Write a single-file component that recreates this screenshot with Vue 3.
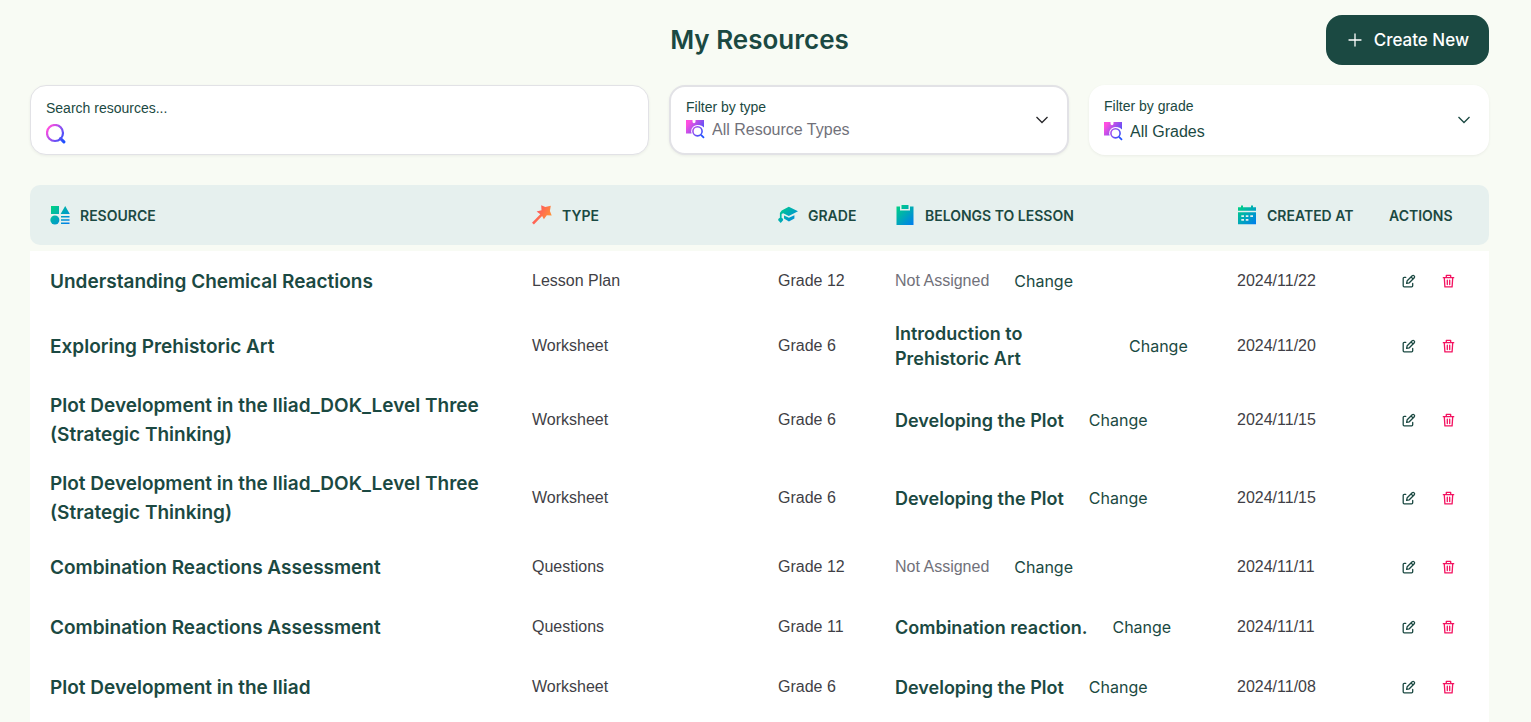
<script setup>
import { ref } from 'vue'

const search = ref('')
const type = ref('')
const grade = ref('all')

const rows = [
  { title: 'Understanding Chemical Reactions', type: 'Lesson Plan', grade: 'Grade 12', lesson: '', date: '2024/11/22' },
  { title: 'Exploring Prehistoric Art', type: 'Worksheet', grade: 'Grade 6', lesson: 'Introduction to Prehistoric Art', date: '2024/11/20' },
  { title: 'Plot Development in the Iliad_DOK_Level Three (Strategic Thinking)', type: 'Worksheet', grade: 'Grade 6', lesson: 'Developing the Plot', date: '2024/11/15' },
  { title: 'Plot Development in the Iliad_DOK_Level Three (Strategic Thinking)', type: 'Worksheet', grade: 'Grade 6', lesson: 'Developing the Plot', date: '2024/11/15' },
  { title: 'Combination Reactions Assessment', type: 'Questions', grade: 'Grade 12', lesson: '', date: '2024/11/11' },
  { title: 'Combination Reactions Assessment', type: 'Questions', grade: 'Grade 11', lesson: 'Combination reaction.', date: '2024/11/11' },
  { title: 'Plot Development in the Iliad', type: 'Worksheet', grade: 'Grade 6', lesson: 'Developing the Plot', date: '2024/11/08' }
]
</script>

<template>
  <main class="page">
    <svg class="defs" width="0" height="0" aria-hidden="true">
      <defs>
        <linearGradient id="pink-blue" gradientUnits="userSpaceOnUse" x1="2" y1="4" x2="19" y2="16">
          <stop offset="0" stop-color="#ff4fe0" />
          <stop offset="1" stop-color="#1c50ff" />
        </linearGradient>
        <linearGradient id="green-blue" gradientUnits="userSpaceOnUse" x1="0" y1="0" x2="20" y2="20">
          <stop offset="0" stop-color="#00d97a" />
          <stop offset="1" stop-color="#0078f5" />
        </linearGradient>
        <linearGradient id="red-orange" gradientUnits="userSpaceOnUse" x1="3" y1="4" x2="18" y2="12">
          <stop offset="0" stop-color="#ff4f63" />
          <stop offset="1" stop-color="#ff9138" />
        </linearGradient>
      </defs>
    </svg>

    <header class="top">
      <h1>My Resources</h1>
      <button class="create" type="button">
        <svg width="14" height="14" viewBox="0 0 14 14" fill="none" stroke="currentColor" stroke-width="1.3" stroke-linecap="round"><path d="M7 1v12M1 7h12" /></svg>
        Create New
      </button>
    </header>

    <section class="filters">
      <div class="box bordered">
        <div class="field spaced">
          <label for="search">Search resources...</label>
          <div class="control">
            <svg width="20" height="20" viewBox="0 0 20 20" fill="none" stroke="url(#pink-blue)"><circle cx="9" cy="9" r="8" stroke-width="2.2" /><path d="M14.500 14.500l3.400 3.400" stroke-width="3" stroke-linecap="round" /></svg>
            <input id="search" v-model="search" type="text">
          </div>
        </div>
      </div>
      <div class="box focused">
        <div class="field">
          <label for="type">Filter by type</label>
          <div class="control">
            <svg width="20" height="20" viewBox="0 1 20 20"><path fill="url(#pink-blue)" d="M0 1h6.500v1.500c0 2.200 3 2.200 3 0V1H18v7.500A7 7 0 0 0 6 14.500H0z" /><circle cx="11.500" cy="12.300" r="6.300" fill="#fff" /><circle cx="11.500" cy="12.300" r="4.600" fill="#fff" stroke="url(#pink-blue)" stroke-width="1.600" /><path d="M15 15.800l3 3" stroke="#2453ff" stroke-width="1.800" /></svg>
            <select id="type" v-model="type" class="placeholder">
              <option value="">All Resource Types</option>
            </select>
          </div>
        </div>
        <svg class="chevron dark" width="12" height="8" viewBox="0 0 12 8" fill="none" stroke="currentColor" stroke-width="1.300"><path d="M.5 1l5.500 5.500L11.500 1" /></svg>
      </div>
      <div class="box">
        <div class="field spaced">
          <label for="grade">Filter by grade</label>
          <div class="control">
            <svg width="20" height="20" viewBox="0 1 20 20"><path fill="url(#pink-blue)" d="M0 1h6.500v1.500c0 2.200 3 2.200 3 0V1H18v7.500A7 7 0 0 0 6 14.500H0z" /><circle cx="11.500" cy="12.300" r="6.300" fill="#fff" /><circle cx="11.500" cy="12.300" r="4.600" fill="#fff" stroke="url(#pink-blue)" stroke-width="1.600" /><path d="M15 15.800l3 3" stroke="#2453ff" stroke-width="1.800" /></svg>
            <select id="grade" v-model="grade">
              <option value="all">All Grades</option>
            </select>
          </div>
        </div>
        <svg class="chevron" width="12" height="8" viewBox="0 0 12 8" fill="none" stroke="currentColor" stroke-width="1.300"><path d="M.5 1l5.500 5.500L11.500 1" /></svg>
      </div>
    </section>

    <section class="list">
      <table>
        <colgroup>
          <col>
          <col class="c-type">
          <col class="c-grade">
          <col class="c-lesson">
          <col class="c-date">
          <col class="c-actions">
        </colgroup>
        <thead>
          <tr>
            <th scope="col">
              <div class="head">
                <svg width="20" height="20" viewBox="0 0 20 20" fill="url(#green-blue)"><path d="M1 1h8v8H1zM15.200 1l4.600 8h-9.200zM11 11h8.500v1.600H11zM11 14.200h8.500v1.600H11zM11 17.400h8.500V19H11z" /><circle cx="4.900" cy="15" r="4.500" /></svg>
                RESOURCE
              </div>
            </th>
            <th scope="col">
              <div class="head">
                <svg width="20" height="20" viewBox="0 0 20 20" fill="url(#red-orange)"><path d="M9.200.2l4.100 1.700L18.800.8l-.9 5.200 1.800 4.500-4.900-.2-2.900 3.900-1.800-3.300-8.200 8.700-1.900-1.900L8.300 9.300 4.600 6.500l4.900-1.200z" /></svg>
                TYPE
              </div>
            </th>
            <th scope="col">
              <div class="head">
                <svg width="20" height="20" viewBox="0 0 20 20"><path fill="url(#green-blue)" d="M10.800 1.800L20 6.300l-9.200 4.600-5.600-2.700-1.600.9v3.600c1.200.5 1.700 1.400 1.500 2.500L2.700 18 .2 15.200c-.2-1.100.5-2 1.700-2.500V7.900l1.800-2.300zM6 10.400l4.900 2.400 5.500-2.600v3.400l-5.500 3-4.900-3z" /></svg>
                GRADE
              </div>
            </th>
            <th scope="col">
              <div class="head">
                <svg width="20" height="20" viewBox="0 0 20 20"><path fill="url(#green-blue)" d="M1.500 1.500H5v4h10v-4h3.500V20h-17zM6.500 0h7v4h-7z" /></svg>
                BELONGS TO LESSON
              </div>
            </th>
            <th scope="col">
              <div class="head">
                <svg width="20" height="20" viewBox="0 0 20 20"><path fill="url(#green-blue)" fill-rule="evenodd" d="M1 2.200h3V.500h2v1.700h8V.500h2v1.700h3v3.500H1zM1 7.300h18v11.900H1zM4.300 10.300v1.600H7v-1.600zm4.500 0v1.600h2.600v-1.600zm4.500 0v1.600H16v-1.600zm-9 3.800v1.600H7v-1.600zm4.500 0v1.600h2.600v-1.600z" /></svg>
                CREATED AT
              </div>
            </th>
            <th scope="col">ACTIONS</th>
          </tr>
        </thead>
        <tbody>
          <tr v-for="(row, i) in rows" :key="i">
            <td><a class="title" href="#">{{ row.title }}</a></td>
            <td>{{ row.type }}</td>
            <td>{{ row.grade }}</td>
            <td>
              <div class="lesson">
                <a v-if="row.lesson" class="lesson-link" href="#">{{ row.lesson }}</a>
                <span v-else class="none">Not Assigned</span>
                <button class="change" type="button">Change</button>
              </div>
            </td>
            <td>{{ row.date }}</td>
            <td>
              <div class="actions">
                <button type="button" class="icon edit" aria-label="Edit">
                  <svg width="14" height="14" viewBox="0 0 14 14" fill="none" stroke="currentColor" stroke-width="1.300" stroke-linecap="round" stroke-linejoin="round"><path d="M3.800 3.300H2.200a1 1 0 0 0-1 1v7.500a1 1 0 0 0 1 1h7.500a1 1 0 0 0 1-1V9.500M4.600 9.400l.6-2.700 5-5a1.500 1.500 0 0 1 2.100 2.100l-5 5zM9 2.900l2.100 2.100" /></svg>
                </button>
                <button type="button" class="icon delete" aria-label="Delete">
                  <svg width="14" height="14" viewBox="0 0 14 14" fill="none" stroke="currentColor" stroke-width="1.300" stroke-linecap="round" stroke-linejoin="round"><path d="M1.300 3.700h10.400M4.300 3.500V1.400h4.400v2.100M2.300 3.900l.6 9h7.200l.6-9M5.300 6.200v4.400M7.700 6.200v4.400" /></svg>
                </button>
              </div>
            </td>
          </tr>
        </tbody>
      </table>
      <div class="list-fill"></div>
    </section>
  </main>
</template>

<style>
body {
  margin: 0;
  background: #f8fbf4;
}
</style>

<style scoped>
.page {
  display: flex;
  flex-direction: column;
  box-sizing: border-box;
  min-height: 100vh;
  padding: 15px 42px 0 30px;
  color: #1b4942;
  font-family: "Liberation Sans", Arial, sans-serif;
}
.defs {
  position: absolute;
}
.top {
  display: grid;
  grid-template-columns: 1fr auto 1fr;
  align-items: center;
}
h1 {
  grid-column: 2;
  margin: 0;
  font-family: Inter, sans-serif;
  font-size: 26px;
  font-weight: 600;
  line-height: 40px;
}
button {
  padding: 0;
  border: 0;
  background: none;
  cursor: pointer;
}
.create {
  justify-self: end;
  display: flex;
  align-items: center;
  gap: 12px;
  height: 50px;
  padding: 0 20px 0 22px;
  border-radius: 16px;
  background: #1b4942;
  color: #fff;
  font-family: Inter, sans-serif;
  font-size: 17px;
  font-weight: 500;
}
.filters {
  display: grid;
  grid-template-columns: 1fr 400px 400px;
  gap: 20px;
  margin-top: 20px;
}
.box {
  display: flex;
  align-items: center;
  box-sizing: border-box;
  height: 70px;
  padding: 0 19px 0 15px;
  border-radius: 16px;
  background: #fff;
  box-shadow: 0 1px 3px rgba(0, 0, 0, 0.06);
}
.bordered {
  padding-top: 4px;
  border: 1px solid #e2e2e6;
}
.focused {
  border: 2px solid #e2e2e6;
}
.field {
  flex: 1;
  min-width: 0;
}
.spaced label {
  margin-bottom: 3px;
}
label {
  display: block;
  font-size: 14px;
  line-height: 20px;
}
.control {
  display: flex;
  align-items: center;
  gap: 6px;
  height: 26px;
}
input,
select {
  flex: 1;
  min-width: 0;
  padding: 0;
  border: 0;
  outline: 0;
  background: none;
  appearance: none;
  color: inherit;
  font-family: inherit;
  font-size: 16px;
  line-height: 26px;
}
.placeholder {
  color: #71717a;
}
.chevron {
  pointer-events: none;
}
.dark {
  color: #27272a;
}
.list {
  flex: 1;
  display: flex;
  flex-direction: column;
  margin-top: 30px;
}
.list-fill {
  flex: 1;
  background: #fff;
}
table {
  width: 100%;
  table-layout: fixed;
  border-spacing: 0;
}
.c-type { width: 246px; }
.c-grade { width: 117px; }
.c-lesson { width: 342px; }
.c-date { width: 152px; }
.c-actions { width: 120px; }
th {
  height: 60px;
  padding: 0 0 0 20px;
  background: #e6f0ee;
  font-family: Inter, sans-serif;
  font-size: 14px;
  font-weight: 600;
  text-align: left;
  white-space: nowrap;
}
th:first-child {
  border-radius: 10px 0 0 10px;
}
th:last-child {
  border-radius: 0 10px 10px 0;
}
.head {
  display: flex;
  align-items: center;
  gap: 10px;
}
tbody::before {
  content: "";
  display: block;
  height: 6px;
}
td {
  box-sizing: border-box;
  height: 60px;
  padding: 10px 20px;
  background: #fff;
  color: #3f3f46;
  font-size: 16px;
  line-height: 24px;
}
a {
  color: #1b4942;
  font-family: Inter, sans-serif;
  font-weight: 600;
  text-decoration: none;
}
.title {
  display: block;
  font-size: 19px;
  line-height: 29px;
}
.lesson {
  display: flex;
  align-items: center;
  gap: 25px;
}
.lesson-link {
  max-width: 209px;
  font-size: 18px;
  line-height: 25px;
}
.none {
  color: #71717a;
}
.change {
  color: #1b4942;
  font-family: Inter, sans-serif;
  font-size: 16px;
  line-height: 24px;
}
.actions {
  display: flex;
}
.icon {
  display: flex;
  align-items: center;
  justify-content: center;
  width: 40px;
  height: 40px;
}
.edit {
  color: #1b4942;
}
.delete {
  color: #f31260;
}
</style>
